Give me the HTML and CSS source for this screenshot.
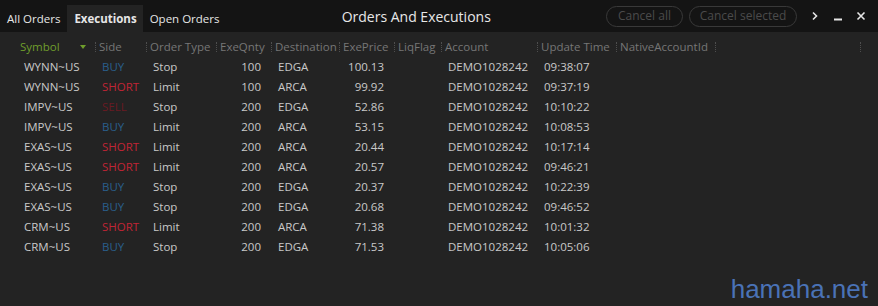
FILE: index.html
```html
<!DOCTYPE html>
<html lang="en">
  <head>
    <meta charset="UTF-8" />
    <meta name="viewport" content="width=device-width, initial-scale=1.0" />
    <title>Orders And Executions</title>
    <link rel="stylesheet" href="styles.css">
  </head>

  <body>
    <div class="win">
      <div class="topBar">
        <div class="tabs">
          <span>All Orders</span>
          <span class="current">Executions</span>
          <span>Open Orders</span>
        </div>
        <div class="title">Orders And Executions</div>
        <div class="actions">
          <span class="btn">Cancel all</span>
          <span class="btn wide">Cancel selected</span>
          <span class="ico">
            <svg width="8" height="10" viewBox="0 0 8 10"><path d="M2 1.5 L5.5 5 L2 8.5" fill="none" stroke="#e6e6e6" stroke-width="1.6"/></svg>
          </span>
          <span class="ico">
            <svg width="10" height="10" viewBox="0 0 10 10"><rect x="1" y="7.5" width="8" height="2" fill="#e6e6e6"/></svg>
          </span>
          <span class="ico">
            <svg width="10" height="10" viewBox="0 0 10 10"><path d="M1.5 1.5 L8.5 8.5 M8.5 1.5 L1.5 8.5" stroke="#e6e6e6" stroke-width="1.6"/></svg>
          </span>
        </div>
      </div>

      <div class="grid">
        <div class="row head">
          <div class="sym">Symbol <i class="sort"></i></div>
          <div class="sep">Side</div>
          <div class="sep">Order Type</div>
          <div class="sep">ExeQnty</div>
          <div class="sep">Destination</div>
          <div class="sep">ExePrice</div>
          <div class="sep">LiqFlag</div>
          <div class="sep">Account</div>
          <div class="sep">Update Time</div>
          <div class="sep">NativeAccountId</div>
          <div class="sep"></div>
          <div class="sep"></div>
        </div>
        <div id="rows"></div>
      </div>

      <div class="mark">hamaha.net</div>
    </div>

    <script>
      var data = [
        ["WYNN~US", "BUY", "Stop", 100, "EDGA", "100.13", "09:38:07"],
        ["WYNN~US", "SHORT", "Limit", 100, "ARCA", "99.92", "09:37:19"],
        ["IMPV~US", "SELL", "Stop", 200, "EDGA", "52.86", "10:10:22"],
        ["IMPV~US", "BUY", "Limit", 200, "ARCA", "53.15", "10:08:53"],
        ["EXAS~US", "SHORT", "Limit", 200, "ARCA", "20.44", "10:17:14"],
        ["EXAS~US", "SHORT", "Limit", 200, "ARCA", "20.57", "09:46:21"],
        ["EXAS~US", "BUY", "Stop", 200, "EDGA", "20.37", "10:22:39"],
        ["EXAS~US", "BUY", "Stop", 200, "EDGA", "20.68", "09:46:52"],
        ["CRM~US", "SHORT", "Limit", 200, "ARCA", "71.38", "10:01:32"],
        ["CRM~US", "BUY", "Stop", 200, "EDGA", "71.53", "10:05:06"]
      ];
      var html = "";
      for (var i = 0; i < data.length; i++) {
        var d = data[i];
        html +=
          '<div class="row">' +
          "<div>" + d[0] + "</div>" +
          '<div class="' + d[1].toLowerCase() + '">' + d[1] + "</div>" +
          "<div>" + d[2] + "</div>" +
          '<div class="num">' + d[3] + "</div>" +
          "<div>" + d[4] + "</div>" +
          '<div class="num">' + d[5] + "</div>" +
          "<div></div>" +
          "<div>DEMO1028242</div>" +
          "<div>" + d[6] + "</div>" +
          "<div></div><div></div><div></div>" +
          "</div>";
      }
      document.getElementById("rows").innerHTML = html;
    </script>
  </body>
</html>
```

FILE: styles.css
```css
html,
body {
  margin: 0;
  padding: 0;
  background: #232323;
}
body {
  font-family: "Open Sans", "Noto Sans", sans-serif;
  font-size: 11.5px;
  color: #c9c9c9;
}

.win {
  width: 878px;
  height: 306px;
  position: relative;
  background: #232323;
  overflow: hidden;
}

/* top bar */
.topBar {
  height: 32px;
  display: flex;
  align-items: flex-end;
  background: #141414;
}
.tabs {
  display: flex;
  height: 27px;
}
.tabs span {
  padding: 0 7px;
  line-height: 27px;
  font-size: 11.5px;
  color: #e6e6e6;
}
.tabs .current {
  background: #232323;
  font-weight: bold;
  padding: 0 6px 0 7px;
}
.title {
  flex: 1;
  align-self: stretch;
  text-align: center;
  line-height: 33px;
  font-size: 14px;
  color: #e8e8e8;
}
.actions {
  align-self: stretch;
  display: flex;
  align-items: center;
  gap: 6px;
  padding-right: 6px;
}
.btn {
  width: 75px;
  height: 19px;
  line-height: 18px;
  text-align: center;
  border: 1px solid #393939;
  border-radius: 11px;
  color: #4b4b4b;
  font-size: 12px;
}
.btn.wide {
  width: 106px;
}
.ico {
  width: 23px;
  display: flex;
  justify-content: center;
  margin-left: -6px;
}
.btn.wide + .ico {
  margin-left: 0;
}

/* grid */
.grid {
  padding-top: 5px;
}
.row {
  display: grid;
  grid-template-columns: 17px 78px 51px 70px 55px 68px 55px 47px 96px 79px 99px 145px 1fr;
  height: 20px;
  line-height: 20px;
  white-space: nowrap;
}
.row::before {
  content: "";
}
.row div {
  padding-left: 7px;
  overflow: hidden;
}
.row .num {
  text-align: right;
  padding: 0 10px 0 0;
}
.head div {
  color: #767676;
  padding-left: 4px;
  position: relative;
}
.head .sym {
  color: #6f9e2c;
  padding-left: 3px;
}
.head .sep::before {
  content: "";
  position: absolute;
  left: 0;
  top: 5px;
  height: 10px;
  border-left: 1px dotted #4e4e4e;
}
.sort {
  position: absolute;
  left: 63px;
  top: 8px;
  border-left: 3px solid transparent;
  border-right: 3px solid transparent;
  border-top: 4px solid #6f9e2c;
}

.buy {
  color: #2a5f8c;
}
.short {
  color: #c02535;
}
.sell {
  color: #6a1a22;
}

.mark {
  position: absolute;
  right: 10px;
  bottom: 1px;
  font-family: "Liberation Sans", Arial, sans-serif;
  font-size: 26px;
  color: #4a72b6;
}
```
